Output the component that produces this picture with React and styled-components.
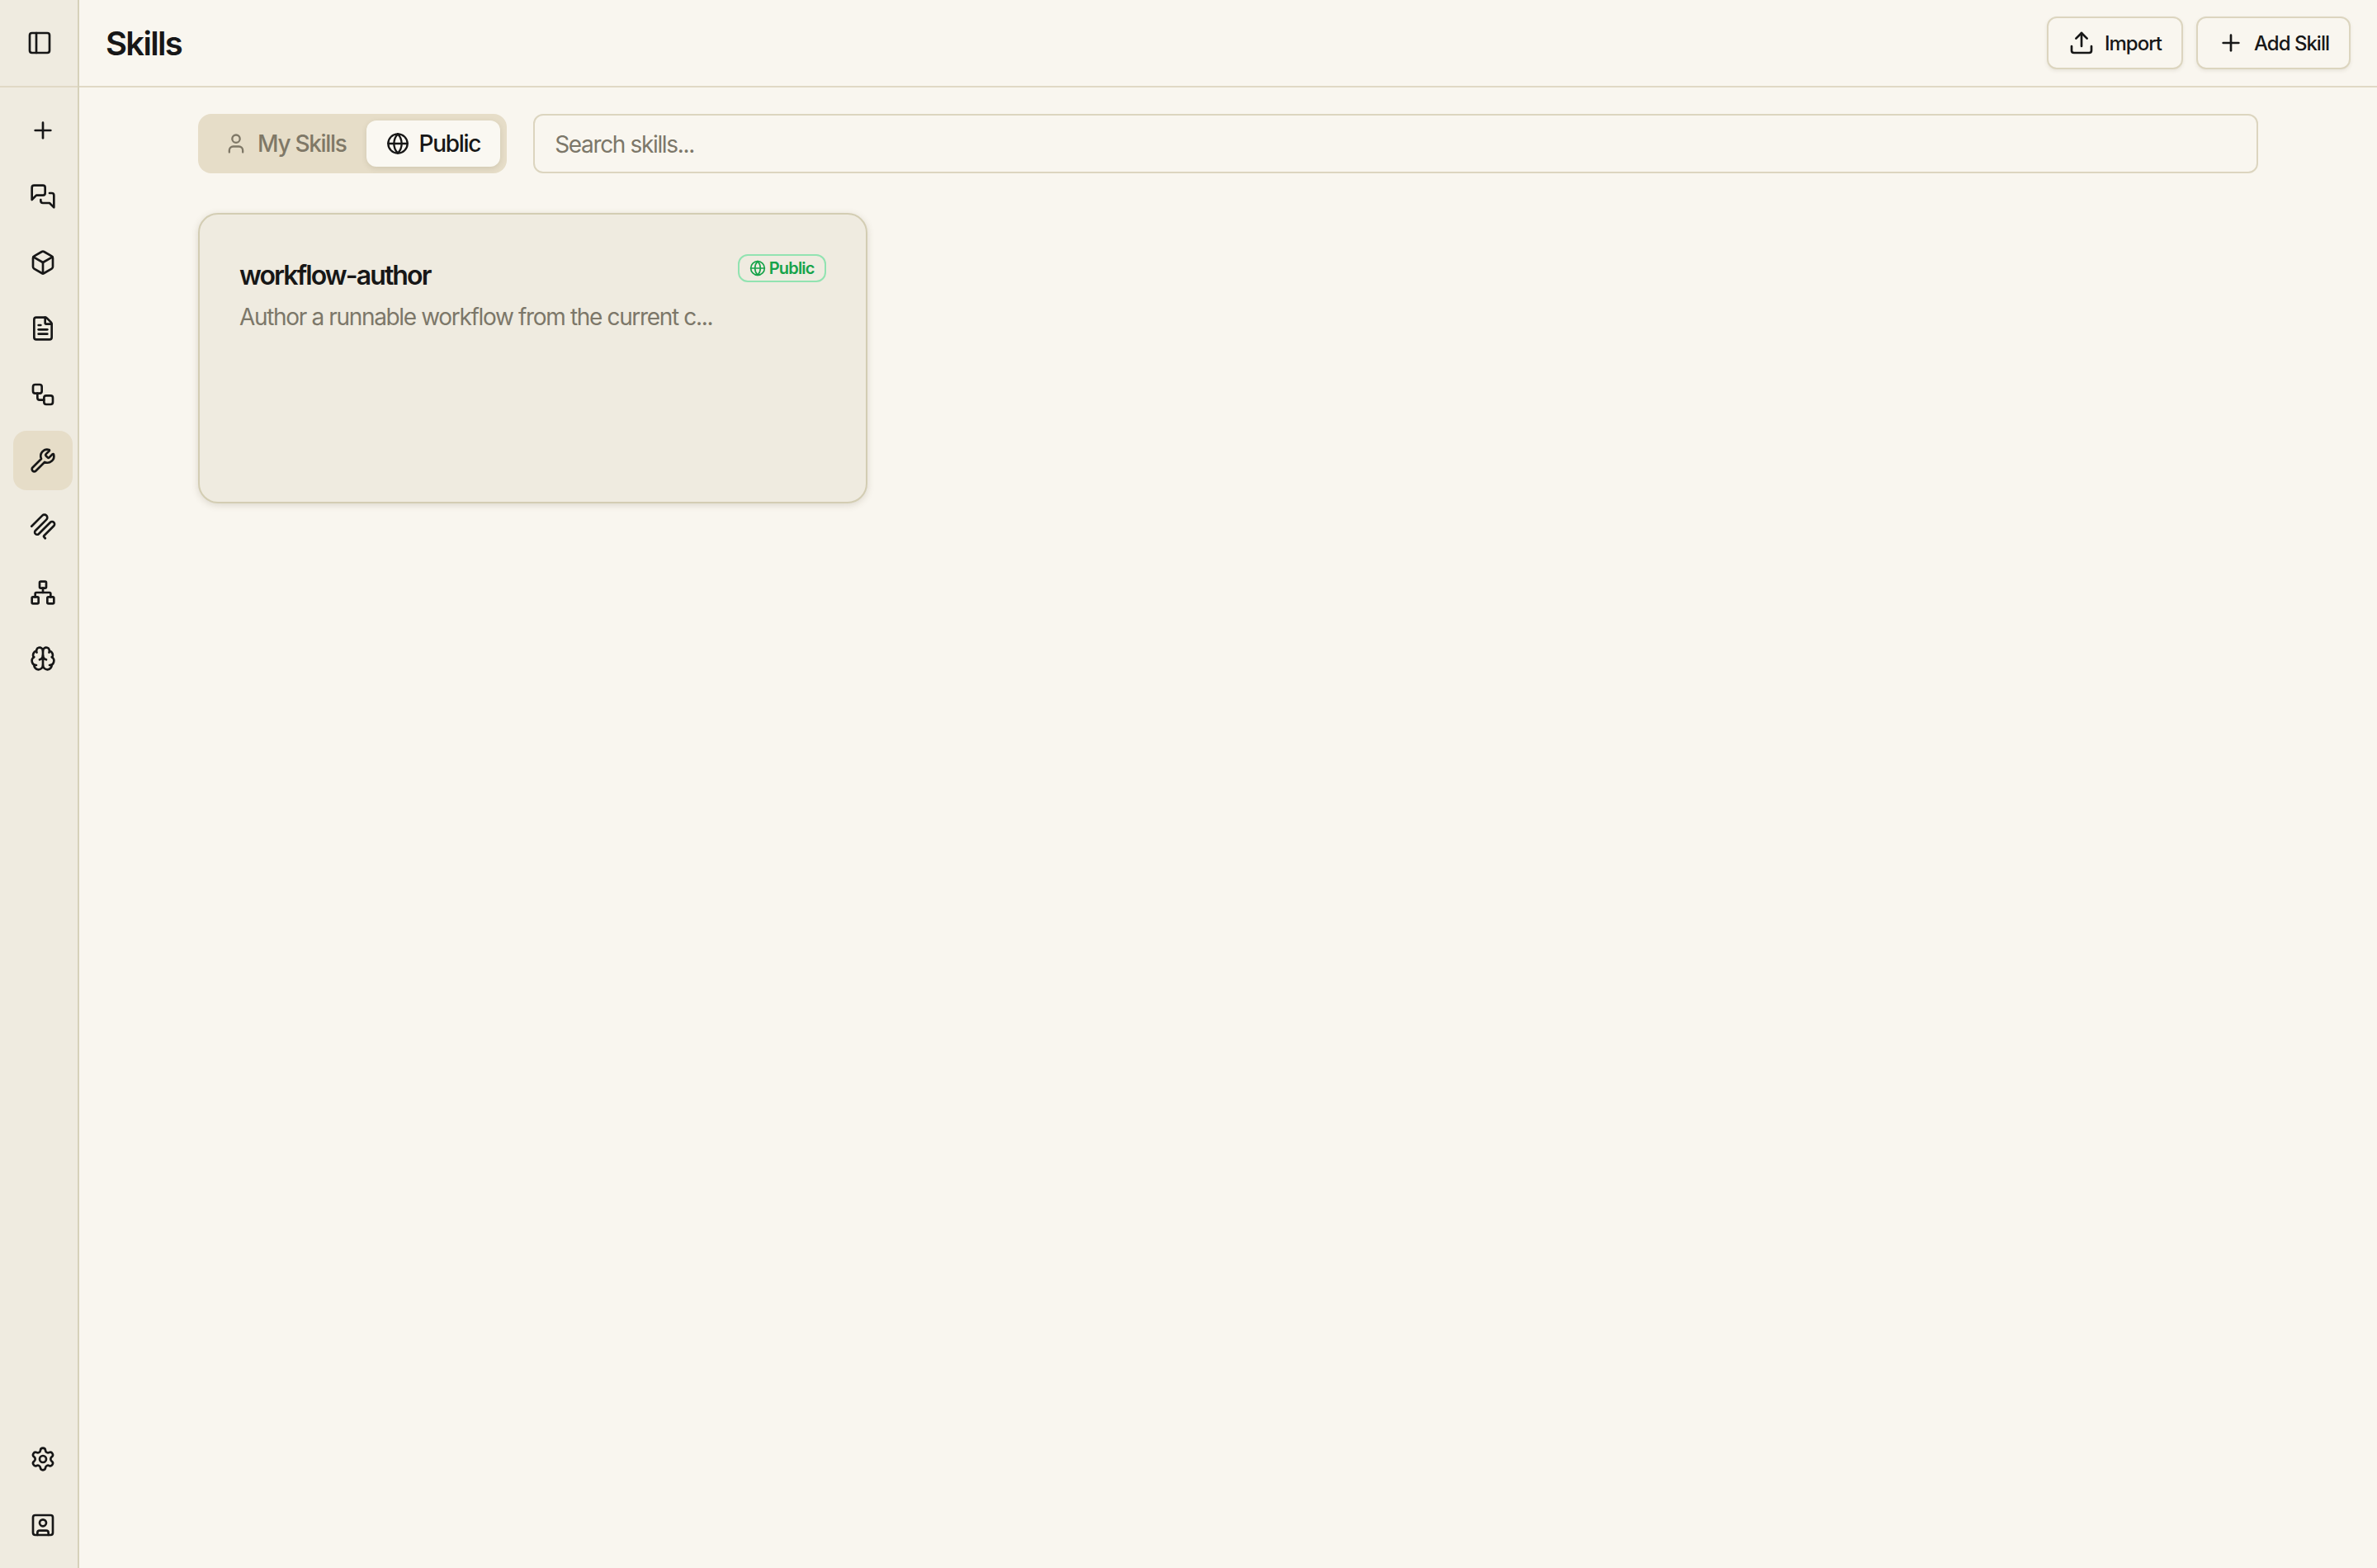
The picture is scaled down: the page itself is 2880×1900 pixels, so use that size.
import React from 'react';
import styled, { createGlobalStyle } from 'styled-components';
import {
  PanelLeft, Plus, Box, FileText, Workflow, Wrench, Network,
  Brain, Settings, SquareUser, Upload, User, Globe,
} from 'lucide-react';

const GlobalStyle = createGlobalStyle`
  html, body {
    margin: 0;
    padding: 0;
    height: 100%;
    background: #f9f6ef;
    font-family: Inter, "Liberation Sans", sans-serif;
    color: #171717;
  }
  #root { height: 100%; }
  * { box-sizing: border-box; }
`;

const Shell = styled.div`
  display: flex;
  height: 100vh;
  background: #f9f6ef;
`;

const Sidebar = styled.aside`
  width: 96px;
  flex: none;
  display: flex;
  flex-direction: column;
  background: #efebe0;
  border-right: 2px solid #d6d1ba;
`;

const SidebarTop = styled.div`
  height: 106px;
  flex: none;
  display: flex;
  align-items: center;
  justify-content: center;
  padding-left: 2px;
  border-bottom: 2px solid #e0d9c5;
`;

const NavGroup = styled.nav`
  display: flex;
  flex-direction: column;
  gap: 8px;
  padding: 16px 0 16px 16px;
  margin-top: ${p => (p.$bottom ? 'auto' : '0')};
`;

const NavItem = styled.div`
  width: 72px;
  height: 72px;
  display: flex;
  align-items: center;
  justify-content: center;
  border-radius: 16px;
  color: #171717;
  background: ${p => (p.$active ? '#e6ddc8' : 'transparent')};
`;

const Main = styled.main`
  flex: 1;
  min-width: 0;
  display: flex;
  flex-direction: column;
`;

const Header = styled.header`
  height: 106px;
  flex: none;
  display: flex;
  align-items: center;
  justify-content: space-between;
  padding: 0 32px;
  border-bottom: 2px solid #e0d9c5;
`;

const Title = styled.h1`
  margin: 0;
  font-size: 40px;
  font-weight: 600;
  letter-spacing: -1.7px;
  color: #171717;
`;

const Actions = styled.div`
  display: flex;
  gap: 16px;
`;

const ActionButton = styled.button`
  height: 64px;
  display: flex;
  align-items: center;
  gap: 12px;
  padding: 0 24px;
  border: 2px solid #dcd5bf;
  border-radius: 12px;
  background: #f9f6ef;
  box-shadow: 0 2px 4px rgba(90, 80, 50, 0.1);
  font-family: inherit;
  font-size: 24px;
  font-weight: 500;
  letter-spacing: -1px;
  color: #171717;
`;

const Content = styled.div`
  padding: 32px 144px;
  display: flex;
  flex-direction: column;
  gap: 48px;
`;

const Toolbar = styled.div`
  display: flex;
  gap: 32px;
`;

const Tabs = styled.div`
  display: flex;
  padding: 8px;
  background: #e6ddc8;
  border-radius: 16px;
`;

const Tab = styled.div`
  height: 56px;
  display: flex;
  align-items: center;
  gap: 12px;
  padding: 0 24px;
  border-radius: 12px;
  font-size: 28px;
  font-weight: 500;
  letter-spacing: -1.3px;
  color: ${p => (p.$active ? '#171717' : '#7f7867')};
  background: ${p => (p.$active ? '#faf8f2' : 'transparent')};
  box-shadow: ${p => (p.$active ? '0 2px 6px rgba(90, 80, 50, 0.15)' : 'none')};
`;

const Search = styled.input`
  flex: 1;
  min-width: 0;
  height: 72px;
  padding: 2px 24px 0;
  border: 2px solid #dcd5bf;
  border-radius: 12px;
  background: #f9f6ef;
  font-family: inherit;
  font-size: 28px;
  letter-spacing: -1.35px;
  color: #171717;
  &::placeholder {
    color: #7c7769;
    opacity: 1;
  }
`;

const CardGrid = styled.div`
  display: grid;
  grid-template-columns: repeat(3, 1fr);
  gap: 32px;
`;

const Card = styled.div`
  height: 352px;
  padding: 48px;
  border: 2px solid #d3cdb3;
  border-radius: 24px;
  background: #efebe0;
  box-shadow: 0 2px 8px rgba(90, 80, 50, 0.18);
`;

const CardHead = styled.div`
  display: flex;
  align-items: flex-start;
  justify-content: space-between;
  gap: 16px;
`;

const CardTitle = styled.h3`
  margin: 0 0 5px;
  padding-top: 2px;
  font-size: 32px;
  line-height: 48px;
  font-weight: 600;
  letter-spacing: -1.9px;
  color: #171717;
`;

const Badge = styled.span`
  display: flex;
  align-items: center;
  gap: 4px;
  height: 34px;
  padding: 0 12px;
  border: 2px solid #92e3b1;
  border-radius: 12px;
  font-size: 20px;
  font-weight: 600;
  letter-spacing: -0.8px;
  color: #16a34a;
`;

const Description = styled.p`
  margin: 0;
  font-size: 28px;
  line-height: 42px;
  letter-spacing: -1.34px;
  color: #7c7769;
`;

const IconSvg = ({ children }) => (
  <svg width="32" height="32" viewBox="0 0 24 24" fill="none" stroke="currentColor" strokeWidth="2" strokeLinecap="round" strokeLinejoin="round">
    {children}
  </svg>
);

// serpentine mark, lucide has nothing close to it
const CoilIcon = () => (
  <IconSvg>
    <path d="M1.7 11.8 11.5 2a2.6 2.6 0 0 1 3.7 3.7L5.2 15.7a2.12 2.12 0 0 0 3 3L18.7 8.2a2.26 2.26 0 0 1 3.2 3.2l-8.8 8.8a1 1 0 0 0 0 1.4l1 1.1" />
  </IconSvg>
);

// older lucide bubbles, the current ones have a softer tail
const ChatIcon = () => (
  <IconSvg>
    <path d="M14 9a2 2 0 0 1-2 2H6l-4 4V4a2 2 0 0 1 2-2h8a2 2 0 0 1 2 2z" />
    <path d="M18 9h2a2 2 0 0 1 2 2v11l-4-4h-6a2 2 0 0 1-2-2v-1" />
  </IconSvg>
);

const topNav = [Plus, ChatIcon, Box, FileText, Workflow, Wrench, CoilIcon, Network, Brain];
const bottomNav = [Settings, SquareUser];

export default function App() {
  return (
    <>
      <GlobalStyle />
      <Shell>
        <Sidebar>
          <SidebarTop>
            <PanelLeft size={32} />
          </SidebarTop>
          <NavGroup>
            {topNav.map((Icon, i) => (
              <NavItem key={i} $active={Icon === Wrench}>
                <Icon size={32} />
              </NavItem>
            ))}
          </NavGroup>
          <NavGroup $bottom>
            {bottomNav.map((Icon, i) => (
              <NavItem key={i}>
                <Icon size={32} />
              </NavItem>
            ))}
          </NavGroup>
        </Sidebar>
        <Main>
          <Header>
            <Title>Skills</Title>
            <Actions>
              <ActionButton><Upload size={32} />Import</ActionButton>
              <ActionButton><Plus size={32} />Add Skill</ActionButton>
            </Actions>
          </Header>
          <Content>
            <Toolbar>
              <Tabs>
                <Tab><User size={28} />My Skills</Tab>
                <Tab $active><Globe size={28} />Public</Tab>
              </Tabs>
              <Search placeholder="Search skills..." />
            </Toolbar>
            <CardGrid>
              <Card>
                <CardHead>
                  <CardTitle>workflow-author</CardTitle>
                  <Badge><Globe size={20} />Public</Badge>
                </CardHead>
                <Description>Author a runnable workflow from the current c...</Description>
              </Card>
            </CardGrid>
          </Content>
        </Main>
      </Shell>
    </>
  );
}
